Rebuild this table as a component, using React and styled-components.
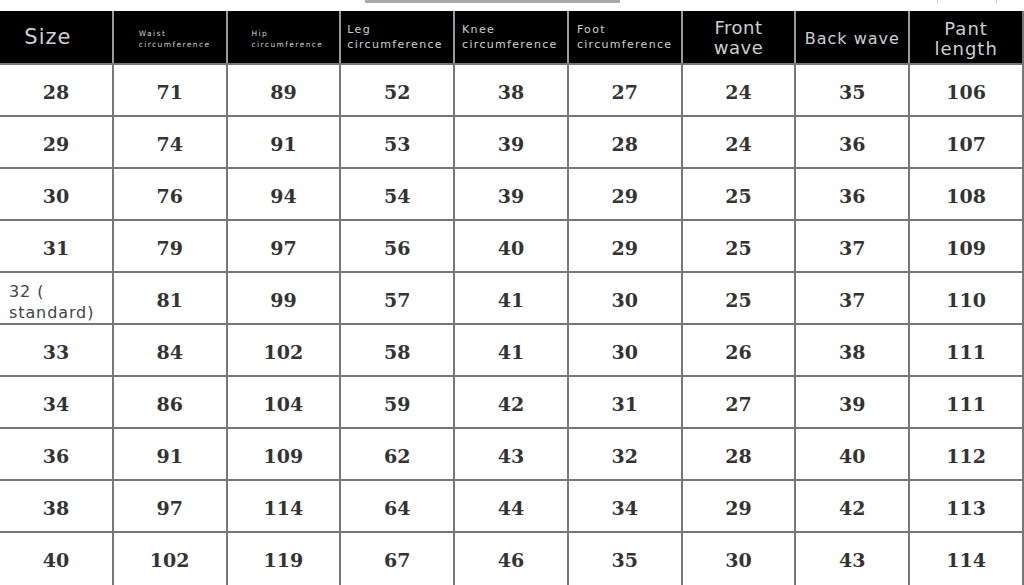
import React from "react";
import styled, { createGlobalStyle } from "styled-components";

const Global = createGlobalStyle`
  html, body { margin: 0; padding: 0; background: #fff; }
  body { width: 1024px; height: 585px; overflow: hidden; font-family: "DejaVu Sans", sans-serif; }
`;

const Page = styled.div`
  width: 1024px;
  height: 585px;
  display: flex;
  flex-direction: column;
  overflow: hidden;
`;

const TopStrip = styled.div`
  height: 11px;
  display: flex;
  align-items: flex-start;
  flex-shrink: 0;
`;

const TopBar = styled.div`
  margin-left: 365px;
  width: 255px;
  height: 3px;
  background: #a8a8a8;
  border-radius: 0 0 1px 1px;
`;

const Tick = styled.div`
  margin-left: ${(p) => p.$gap}px;
  width: 1px;
  height: 4px;
  background: #d4d4d4;
`;

const Table = styled.div`
  display: flex;
  flex-direction: column;
  gap: 2px;
  background: #777;
  padding-right: 2px;
  flex: 1;
`;

const Row = styled.div`
  display: grid;
  grid-template-columns: repeat(9, 1fr);
  column-gap: 2px;
  flex: 0 0 ${(p) => p.$h}px;
  background: ${(p) => (p.$head ? "#9a9a9a" : "#777")};
`;

const HeadCell = styled.div`
  background: #000;
  color: #cfcfcf;
  display: flex;
  flex-direction: column;
  justify-content: center;
  align-items: ${(p) => (p.$align === "left" ? "flex-start" : "center")};
  text-align: ${(p) => (p.$align === "left" ? "left" : "center")};
  padding: ${(p) => p.$pad || "0"};
  font-family: "DejaVu Sans", sans-serif;
  font-size: ${(p) => p.$size}px;
  line-height: ${(p) => p.$lh}px;
  letter-spacing: ${(p) => p.$ls || 0}px;
  white-space: nowrap;
  overflow: hidden;
`;

const Cell = styled.div`
  background: #fff;
  display: flex;
  align-items: center;
  justify-content: center;
  padding-top: ${(p) => (p.$last ? 2 : 4)}px;
  font-family: "DejaVu Serif", serif;
  font-weight: bold;
  font-size: 19px;
  color: #333;
`;

const SizeCell = styled.div`
  background: #fff;
  display: flex;
  flex-direction: column;
  justify-content: center;
  padding: 8px 0 0 9px;
  font-family: "DejaVu Sans", sans-serif;
  font-size: 16px;
  line-height: 21px;
  letter-spacing: 0.9px;
  color: #444;
  white-space: nowrap;
`;

const headers = [
  { lines: ["Size"], size: 21, lh: 24, ls: 1, pad: "0 16px 0 0" },
  { lines: ["Waist", "circumference"], size: 7.5, lh: 11, ls: 1.4, align: "left", pad: "3px 0 0 25px" },
  { lines: ["Hip", "circumference"], size: 7.5, lh: 11, ls: 1.4, align: "left", pad: "3px 0 0 24px" },
  { lines: ["Leg", "circumference"], size: 11, lh: 15, ls: 1.3, align: "left", pad: "0 0 0 6px" },
  { lines: ["Knee", "circumference"], size: 11, lh: 15, ls: 1.3, align: "left", pad: "0 0 0 7px" },
  { lines: ["Foot", "circumference"], size: 11, lh: 15, ls: 1.3, align: "left", pad: "0 0 0 8px" },
  { lines: ["Front", "wave"], size: 18, lh: 20, ls: 0.5, pad: "2px 0 0 0" },
  { lines: ["Back wave"], size: 16, lh: 20, ls: 1, pad: "4px 0 0 0" },
  { lines: ["Pant", "length"], size: 18, lh: 20, ls: 1, pad: "4px 0 0 0" },
];

const rows = [
  ["28", 71, 89, 52, 38, 27, 24, 35, 106],
  ["29", 74, 91, 53, 39, 28, 24, 36, 107],
  ["30", 76, 94, 54, 39, 29, 25, 36, 108],
  ["31", 79, 97, 56, 40, 29, 25, 37, 109],
  ["32std", 81, 99, 57, 41, 30, 25, 37, 110],
  ["33", 84, 102, 58, 41, 30, 26, 38, 111],
  ["34", 86, 104, 59, 42, 31, 27, 39, 111],
  ["36", 91, 109, 62, 43, 32, 28, 40, 112],
  ["38", 97, 114, 64, 44, 34, 29, 42, 113],
  ["40", 102, 119, 67, 46, 35, 30, 43, 114],
];

export default function App() {
  return (
    <Page>
      <Global />
      <TopStrip>
        <TopBar />
        <Tick $gap={317} />
        <Tick $gap={58} />
      </TopStrip>
      <Table>
        <Row $h={52} $head>
          {headers.map((h, i) => (
            <HeadCell
              key={i}
              $size={h.size}
              $lh={h.lh}
              $ls={h.ls}
              $align={h.align}
              $pad={h.pad}
            >
              {h.lines.map((l, j) => (
                <span key={j}>{l}</span>
              ))}
            </HeadCell>
          ))}
        </Row>
        {rows.map((r, i) => {
          const last = i === rows.length - 1;
          return (
            <Row key={i} $h={last ? 52 : 50}>
              {r.map((v, j) =>
                j === 0 && v === "32std" ? (
                  <SizeCell key={j}>
                    <span>32 (</span>
                    <span>standard)</span>
                  </SizeCell>
                ) : (
                  <Cell key={j} $last={last}>{v}</Cell>
                )
              )}
            </Row>
          );
        })}
      </Table>
    </Page>
  );
}
